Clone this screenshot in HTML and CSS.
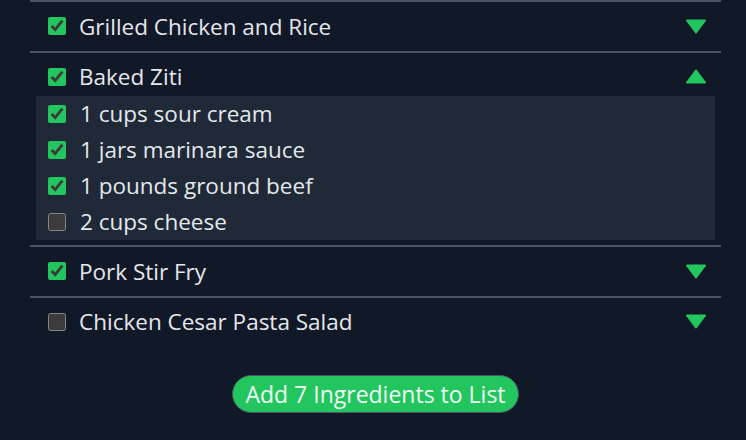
FILE: index.html
```html
<!DOCTYPE html>
<html lang="en">
<head>
<meta charset="utf-8">
<title>Recipes</title>
<link rel="stylesheet" href="styles.css">
</head>
<body>
<div class="recipes">
  <div class="recipe">
    <div class="recipe-head">
      <input type="checkbox" class="cb" checked>
      <span class="name">Grilled Chicken and Rice</span>
      <svg class="caret" viewBox="0 0 22 15" width="22" height="15"><path d="M2 1.5H20L11 13.5Z"/></svg>
    </div>
  </div>
  <div class="recipe">
    <div class="recipe-head">
      <input type="checkbox" class="cb" checked>
      <span class="name">Baked Ziti</span>
      <svg class="caret" viewBox="0 0 22 15" width="22" height="15"><path d="M2 13.5H20L11 1.5Z"/></svg>
    </div>
    <div class="ingredients">
      <label class="ing"><input type="checkbox" class="cb" checked><span>1 cups sour cream</span></label>
      <label class="ing"><input type="checkbox" class="cb" checked><span>1 jars marinara sauce</span></label>
      <label class="ing"><input type="checkbox" class="cb" checked><span>1 pounds ground beef</span></label>
      <label class="ing"><input type="checkbox" class="cb"><span>2 cups cheese</span></label>
    </div>
  </div>
  <div class="recipe">
    <div class="recipe-head">
      <input type="checkbox" class="cb" checked>
      <span class="name">Pork Stir Fry</span>
      <svg class="caret" viewBox="0 0 22 15" width="22" height="15"><path d="M2 1.5H20L11 13.5Z"/></svg>
    </div>
  </div>
  <div class="recipe">
    <div class="recipe-head">
      <input type="checkbox" class="cb">
      <span class="name">Chicken Cesar Pasta Salad</span>
      <svg class="caret" viewBox="0 0 22 15" width="22" height="15"><path d="M2 1.5H20L11 13.5Z"/></svg>
    </div>
  </div>
  <div class="actions">
    <button class="add-btn">Add 7 Ingredients to List</button>
  </div>
</div>
</body>
</html>
```
FILE: styles.css
```css
html, body {
  margin: 0;
  padding: 0;
  background: #111827;
  color-scheme: dark;
}
body {
  font-family: "Open Sans", "Noto Sans", sans-serif;
  color: #e5e7eb;
}
.recipes {
  padding: 0 25px 0 30px;
}
.recipe {
  border-top: 2px solid #4b5563;
  padding: 5px 0 5.5px;
}
.recipe-head {
  height: 38px;
  display: flex;
  align-items: center;
  padding: 0 14px 0 18px;
}
.cb {
  width: 18px;
  height: 18px;
  margin: 0;
  accent-color: #22c55e;
  flex: none;
}
.name {
  font-size: 22.5px;
  margin-left: 13px;
  flex: 1;
}
.caret {
  display: block;
  fill: #22c55e;
  stroke: #22c55e;
  stroke-width: 2;
  stroke-linejoin: round;
}
.ingredients {
  margin: 0 6px;
  background: #1f2937;
  padding-left: 12px;
}
.ing {
  height: 36px;
  display: flex;
  align-items: center;
}
.ing span {
  font-size: 22.5px;
  margin-left: 14px;
}
.actions {
  display: flex;
  justify-content: center;
  padding-top: 29px;
}
.add-btn {
  height: 38px;
  box-sizing: border-box;
  padding: 0 12px;
  border: 1px solid #4b5563;
  border-radius: 999px;
  background: #22c55e;
  color: #f0fdf4;
  font-family: "Open Sans", "Noto Sans", sans-serif;
  font-size: 23px;
}
```
